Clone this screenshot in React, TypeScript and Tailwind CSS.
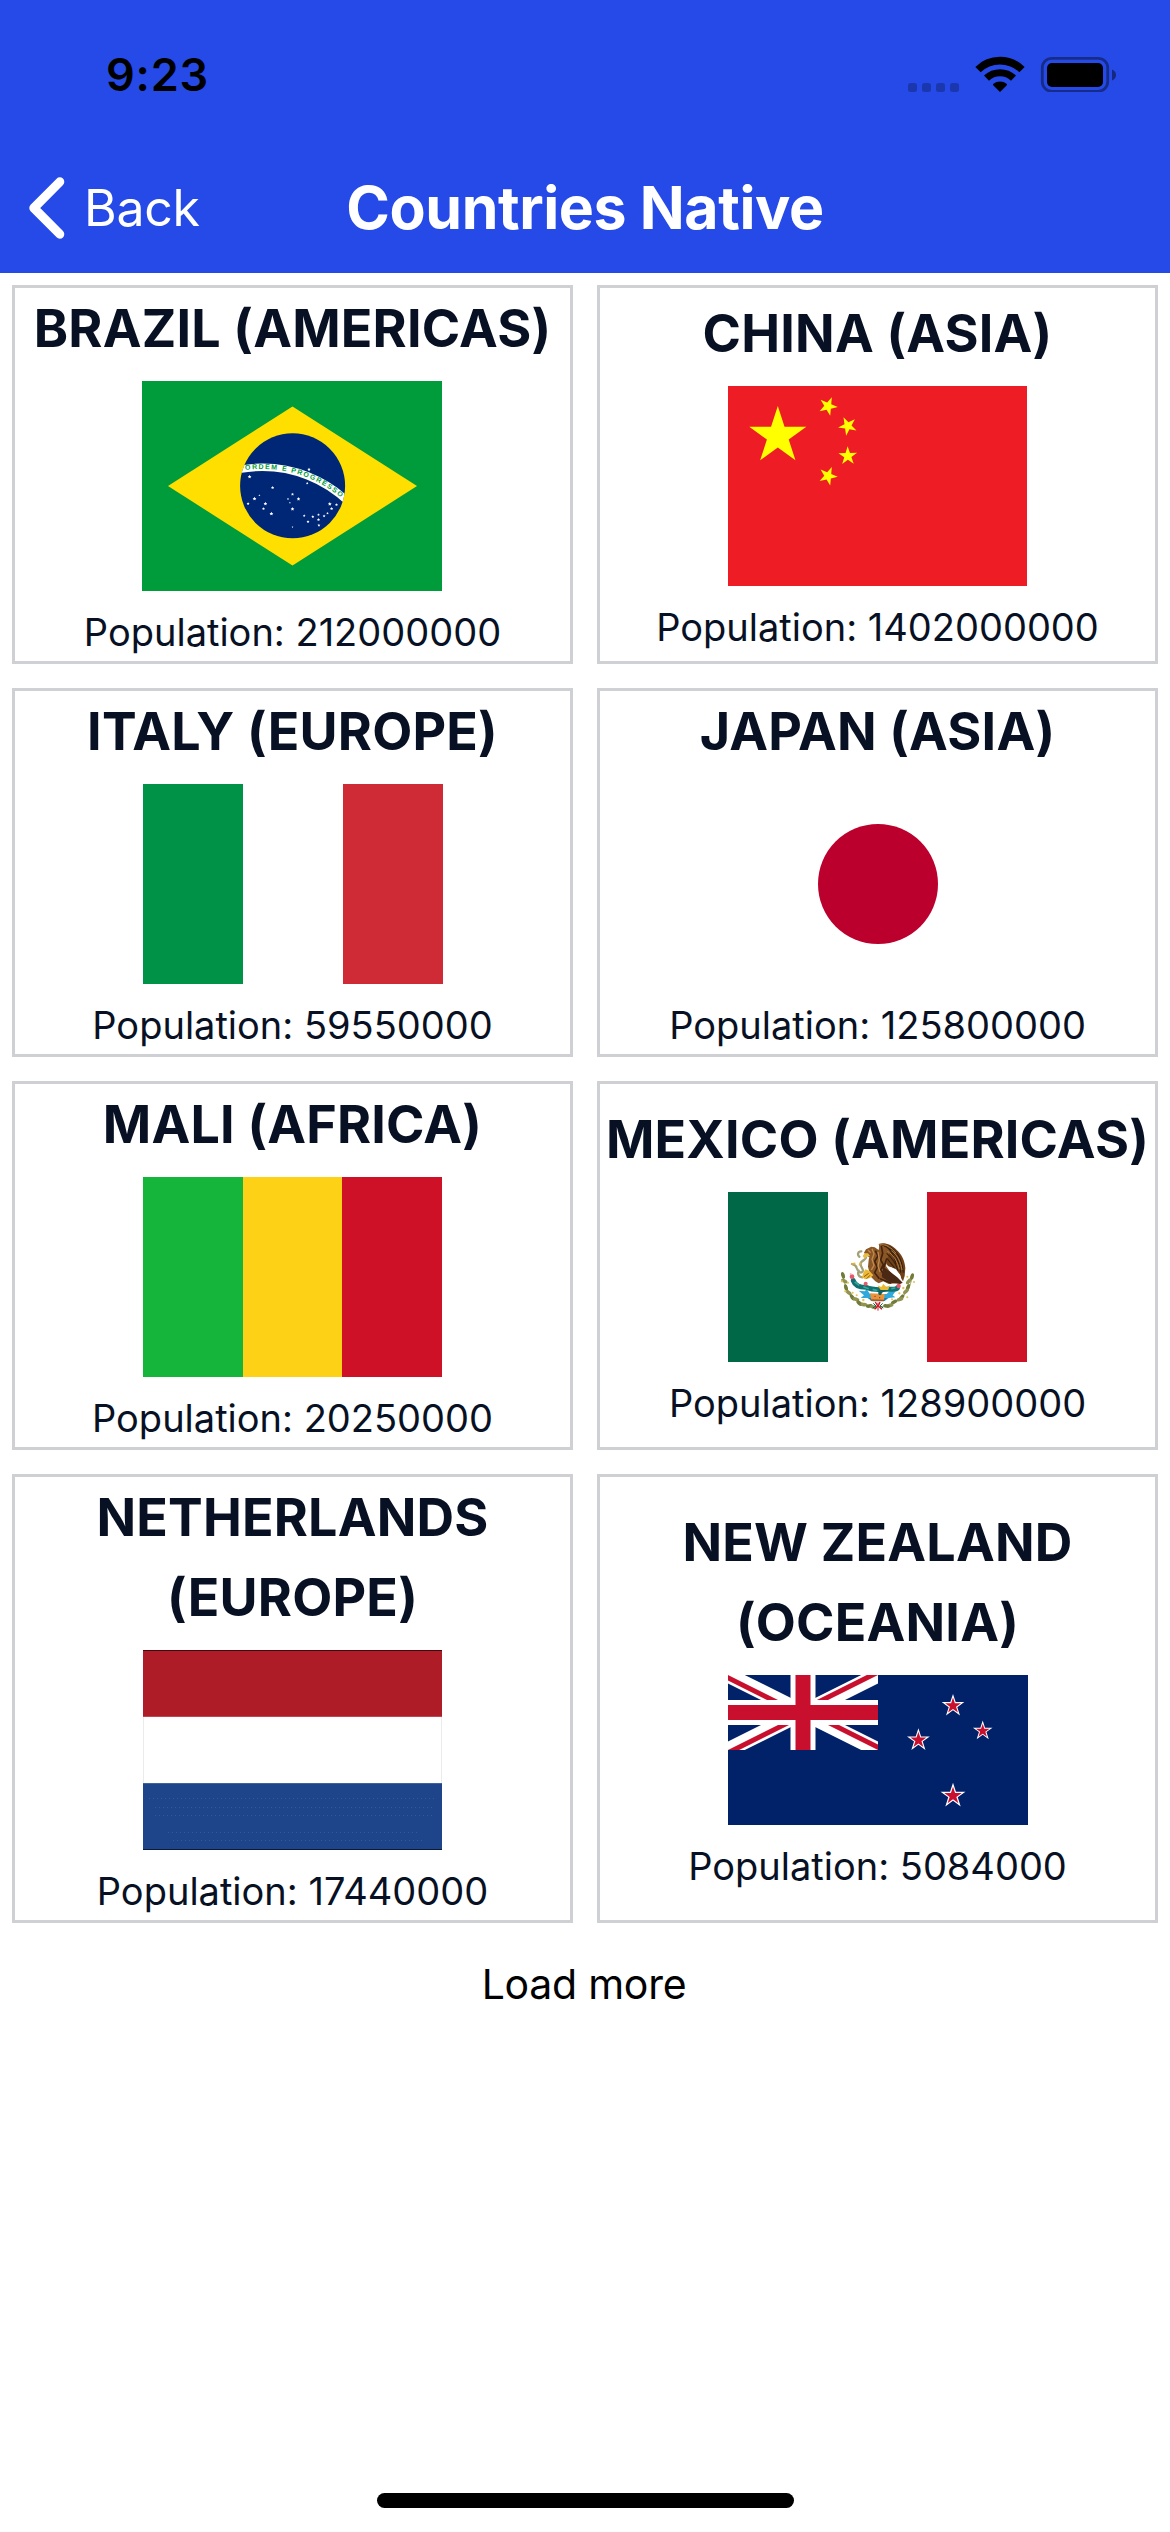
import type { ReactNode } from "react";

function starPoints(cx: number, cy: number, r: number, angle = -90, inner = 0.382) {
  return Array.from({ length: 10 }, (_, i) => {
    const a = ((angle + i * 36) * Math.PI) / 180;
    const rad = i % 2 ? r * inner : r;
    return `${(cx + rad * Math.cos(a)).toFixed(2)},${(cy + rad * Math.sin(a)).toFixed(2)}`;
  }).join(" ");
}

const brazilStars: [number, number, number][] = [
  [167, 88.5, 1.7], [107.6, 95.7, 1.9], [130.6, 106.7, 1.7], [112.5, 117.7, 2], [117.4, 114.3, 1],
  [106.1, 122.7, 1.5], [123.4, 122.7, 1.9], [121.5, 127.7, 1.5], [129.4, 132.7, 2], [150.5, 113.3, 1.6],
  [156.5, 118, 1.9], [146, 118, 1.1], [147.9, 121.7, 0.9], [150.5, 128, 2], [165.2, 102.3, 1.3],
  [187.8, 123, 2], [194.5, 123.7, 1.5], [189.6, 127.7, 1.7], [185.5, 132.3, 1.3], [182.1, 135, 1.5],
  [176.5, 133.7, 1.4], [170.8, 135.7, 1.5], [162.2, 134.7, 1.4], [166, 140.7, 1.5], [176.5, 138.7, 1.6],
  [176.9, 144.3, 1.5], [150.5, 146, 0.9],
];

function Brazil() {
  return (
    <svg className="mr-px h-[210px] w-[300px]" viewBox="0 0 300 210">
      <defs>
        <clipPath id="globe"><circle cx="150.6" cy="104.8" r="52.5" /></clipPath>
        <path id="motto" d="M103.4 89.1 A122 122 0 0 1 201.6 119" />
      </defs>
      <rect width="300" height="210" fill="#009c3b" />
      <path d="M150.5 25.5L275 105L150.5 184.5L26 105Z" fill="#ffdf00" />
      <circle cx="150.6" cy="104.8" r="52.5" fill="#002776" />
      <g clipPath="url(#globe)">
        <circle cx="120.5" cy="210" r="123.75" fill="none" stroke="#fff" strokeWidth="7.5" />
      </g>
      <text fill="#009c3b" fontSize="7" fontWeight="700" fontFamily="Liberation Sans, sans-serif">
        <textPath href="#motto" textLength="102">ORDEM E PROGRESSO</textPath>
      </text>
      {brazilStars.map(([x, y, r], i) => <polygon key={i} points={starPoints(x, y, r, -90, 0.5)} fill="#fff" />)}
    </svg>
  );
}

function China() {
  return (
    <svg className="h-[200px] w-[299px]" viewBox="0 0 299 200">
      <rect width="299" height="200" fill="#ee1c25" />
      <g fill="#ff0">
        <polygon points={starPoints(49.8, 50, 30)} />
        <polygon points={starPoints(100, 20.2, 9.8, 149)} />
        <polygon points={starPoints(119.8, 40, 9.8, 171.9)} />
        <polygon points={starPoints(119.8, 70, 9.8, 197)} />
        <polygon points={starPoints(100, 90, 9.8, 149 + 72)} />
      </g>
    </svg>
  );
}

function Italy() {
  return (
    <div className="ml-px flex h-[200px] w-[300px]">
      <div className="w-[100px] bg-[#009246]" />
      <div className="w-[100px] bg-white" />
      <div className="w-[100px] bg-[#ce2b37]" />
    </div>
  );
}

function Japan() {
  return (
    <div className="ml-px flex h-[200px] w-[300px] items-center justify-center bg-white">
      <div className="size-[120px] rounded-full bg-[#bc002d]" />
    </div>
  );
}

function Mali() {
  return (
    <div className="flex h-[200px] w-[299px]">
      <div className="w-[100px] bg-[#14b53a]" />
      <div className="w-[99px] bg-[#fcd116]" />
      <div className="w-[100px] bg-[#ce1126]" />
    </div>
  );
}

const leaves: [number, number, number][] = [
  [69, 166, 75], [73, 183, 30], [78, 203, 75], [86, 218, 40], [97, 232, 55], [108, 238, 20], [118, 250, 40],
  [132, 254, 5], [148, 258, -10], [160, 261, 15], [276, 170, -75], [266, 184, -50], [264, 202, -70],
  [258, 214, -40], [245, 232, -50], [240, 238, -20], [222, 246, -30], [210, 256, -10], [200, 258, 10],
];

function Mexico() {
  return (
    <svg className="h-[170px] w-[299px]" viewBox="0 0 299 170">
      <rect width="299" height="170" fill="#fff" />
      <rect width="100" height="170" fill="#006847" />
      <rect x="199" width="100" height="170" fill="#ce1126" />
      <g transform="translate(92 28) scale(.33333)">
        <path d="M70 172C76 222 116 256 172 260" fill="none" stroke="#8b8b45" strokeWidth="2.5" />
        <path d="M276 172C268 224 230 256 180 260" fill="none" stroke="#8b8b45" strokeWidth="2.5" />
        {leaves.map(([x, y, a], i) => (
          <ellipse key={i} cx={x} cy={y} rx="10.5" ry="5.5" fill={i % 2 ? "#8f9550" : "#727b39"} transform={`rotate(${a} ${x} ${y})`} />
        ))}
        <g fill="#e6c155">
          <circle cx="66" cy="184" r="3.5" /><circle cx="84" cy="188" r="3" /><circle cx="76" cy="214" r="3.5" />
          <circle cx="98" cy="218" r="3" /><circle cx="110" cy="226" r="3" /><circle cx="130" cy="240" r="3.5" />
          <circle cx="262" cy="170" r="3" /><circle cx="282" cy="186" r="3" /><circle cx="250" cy="204" r="3.5" />
          <circle cx="238" cy="220" r="3.5" /><circle cx="216" cy="238" r="3" /><circle cx="262" cy="232" r="3" />
        </g>
        {/* ribbon */}
        <path d="M166 246L173 258L164 268M180 246L175 258L186 268" fill="none" stroke="#ce1126" strokeWidth="4" />
        <path d="M160 250L168 258L158 264" fill="none" stroke="#006847" strokeWidth="3" />
        <path d="M188 250L180 258L190 264" fill="none" stroke="#006847" strokeWidth="3" />
        <path d="M174 248V272" stroke="#c22" strokeWidth="3" />
        {/* water and stone */}
        <path d="M116 212L134 214L140 208L150 222L200 222L208 214L228 212L218 226L226 232L206 234L194 243H156L142 234L122 234L132 226Z" fill="#2fa9dc" />
        <path d="M146 234H202L192 244H158Z" fill="#1678a8" />
        <path d="M150 220L194 222L192 243L154 242Z" fill="#e8933c" />
        <path d="M152 240L192 241" stroke="#a8521c" strokeWidth="4" />
        <circle cx="165" cy="229" r="2" fill="#8a3f14" /><circle cx="179" cy="233" r="2" fill="#8a3f14" />
        {/* cactus */}
        <path d="M100 182C106 200 122 202 138 202C156 210 176 210 200 208C214 206 228 210 232 204" fill="none" stroke="#12706f" strokeWidth="15" strokeLinecap="round" />
        <path d="M104 186L118 196M130 200L146 206M158 208L172 212M190 206L206 206M214 206L226 204" fill="none" stroke="#35a79c" strokeWidth="5" />
        <path d="M180 220C180 212 190 210 196 208" fill="none" stroke="#0f625f" strokeWidth="11" strokeLinecap="round" />
        <path d="M172 196L184 201L190 192L200 202L210 196L204 210H182Z" fill="#edb92e" />
        <g fill="#e8586c">
          <circle cx="96" cy="170" r="7" /><circle cx="137" cy="191" r="6" /><circle cx="236" cy="198" r="6.5" />
        </g>
        <circle cx="92" cy="162" r="3" fill="#f4b8a8" /><circle cx="240" cy="190" r="3" fill="#f4b8a8" />
        {/* serpent */}
        <path d="M124 94C112 94 112 106 118 110M138 112C138 122 124 120 122 130C120 142 132 146 128 154C122 164 112 150 110 144C108 134 102 134 96 132M116 152C112 162 116 172 128 172" fill="none" stroke="#a3a277" strokeWidth="7" strokeLinecap="round" />
        <path d="M94 132L106 130M122 128L118 136" stroke="#dfb53a" strokeWidth="5" />
        {/* eagle */}
        <path d="M176 72C192 66 216 74 230 90C246 104 254 122 256 144L254 168L249 184L244 176L240 164L234 158L222 146L204 138L190 118Z" fill="#704018" />
        <path d="M138 88L146 84L154 80L164 82L176 90L178 78C188 68 206 76 212 84L204 112L198 138L208 152L238 186L226 190L206 192L190 184L176 190L166 184L154 172L148 156L144 140L146 120L148 112L138 106L132 98Z" fill="#8a5626" />
        <path d="M184 74C204 78 222 98 228 134M192 78C216 86 236 112 242 158M200 100C214 112 228 130 234 152M206 78C228 90 246 116 250 158M200 114L224 144" fill="none" stroke="#34200f" strokeWidth="3.5" />
        <path d="M178 74C196 72 216 82 228 100M202 94C218 102 232 122 238 148M214 92C230 104 242 122 246 150" fill="none" stroke="#b27a3e" strokeWidth="3" />
        <path d="M184 78L188 100L182 120L190 134L182 150L194 166M166 92L174 108L164 124L172 142L164 158L178 176M200 116L190 146L206 170M186 164L232 186M180 176L214 190" fill="none" stroke="#432310" strokeWidth="5" />
        <path d="M156 86L162 102L156 118L162 136L154 150M174 96L178 120L174 138L180 156M144 90L152 98" fill="none" stroke="#c28b4c" strokeWidth="4" />
        <path d="M190 140L198 146L232 172L248 188L240 192L212 188L186 172Z" fill="#4a2814" />
        <path d="M210 140L228 148L240 164L244 178L236 174L218 158Z" fill="#fff" />
        <path d="M134 100L128 108L134 116L140 110L150 108L144 100Z" fill="#e8bd45" />
        <path d="M136 148L130 158L126 172L136 178L150 174L160 166L148 152Z" fill="#edb935" />
        <path d="M132 170L146 160M140 176L150 166" stroke="#8a5a14" strokeWidth="3" />
      </g>
    </svg>
  );
}

function Netherlands() {
  return (
    <svg className="h-[200px] w-[299px]" viewBox="0 0 299 200">
      <rect width="299" height="67" fill="#ae1c28" />
      <rect width="299" height="1" fill="#3f0a10" />
      <rect y="66" width="299" height="1" fill="#bd4851" />
      <rect y="67" width="299" height="66" fill="#ebebeb" />
      <rect x="1" y="67" width="297" height="66" fill="#fff" />
      <rect y="133" width="299" height="67" fill="#1e458a" />
      <rect y="133" width="299" height="1" fill="#3f62a0" />
      <path d="M6 148.5H291M12 157.5H292M12 165.5H292M25 182.5H275M30 190.5H280" stroke="#34589a" strokeWidth="1" strokeDasharray="1 3" />
      <rect y="199" width="299" height="1" fill="#0b1a38" />
    </svg>
  );
}

const nzStars: [number, number, number][] = [[225, 30.8, 11.9], [254.7, 55.9, 10.3], [190.4, 65.2, 12], [225, 120.8, 13.1]];

function NewZealand() {
  return (
    <svg className="ml-px h-[150px] w-[300px]" viewBox="0 0 300 150">
      <defs>
        <clipPath id="canton"><path d="M0 0H150V75H0Z" /></clipPath>
        <clipPath id="saltire"><path d="M75 37.5H150V75ZM75 37.5V75H0ZM75 37.5H0V0ZM75 37.5V0H150Z" /></clipPath>
      </defs>
      <rect width="300" height="150" fill="#012169" />
      <g clipPath="url(#canton)">
        <path d="M0 0L150 75M150 0L0 75" stroke="#fff" strokeWidth="15" />
        <g clipPath="url(#saltire)">
          <path d="M0 0L150 75M150 0L0 75" stroke="#c8102e" strokeWidth="10" />
        </g>
        <path d="M75 0V75M0 37.5H150" stroke="#fff" strokeWidth="25" />
        <path d="M75 0V75M0 37.5H150" stroke="#c8102e" strokeWidth="15" />
      </g>
      {nzStars.map(([x, y, r], i) => (
        <g key={i}>
          <polygon points={starPoints(x, y, r)} fill="#fff" />
          <polygon points={starPoints(x, y, r * 0.7)} fill="#c8102e" />
        </g>
      ))}
    </svg>
  );
}

type Country = { name: string; region: string; population: number; flag: ReactNode };

const countries: Country[] = [
  { name: "BRAZIL", region: "AMERICAS", population: 212000000, flag: <Brazil /> },
  { name: "CHINA", region: "ASIA", population: 1402000000, flag: <China /> },
  { name: "ITALY", region: "EUROPE", population: 59550000, flag: <Italy /> },
  { name: "JAPAN", region: "ASIA", population: 125800000, flag: <Japan /> },
  { name: "MALI", region: "AFRICA", population: 20250000, flag: <Mali /> },
  { name: "MEXICO", region: "AMERICAS", population: 128900000, flag: <Mexico /> },
  { name: "NETHERLANDS", region: "EUROPE", population: 17440000, flag: <Netherlands /> },
  { name: "NEW ZEALAND", region: "OCEANIA", population: 5084000, flag: <NewZealand /> },
];

function CountryCard({ name, region, population, flag }: Country) {
  return (
    <article className="flex flex-col items-center justify-center border-[3px] border-[#cfd0d4] text-[#081124]">
      <h2 className="pt-px text-center text-[52px] leading-[80px] font-bold tracking-[0.2px]">{`${name} (${region})`}</h2>
      <div className="my-3">{flag}</div>
      <p className="text-[38px] leading-[58px]">Population: {population}</p>
    </article>
  );
}

function StatusIcons() {
  return (
    <svg className="h-[36px] w-[208px]" viewBox="0 0 208 36">
      <g fillOpacity="0.25">
        <rect x="0" y="27" width="9" height="9" rx="2.5" />
        <rect x="14" y="27" width="9" height="9" rx="2.5" />
        <rect x="28" y="27" width="9" height="9" rx="2.5" />
        <rect x="42" y="27" width="9" height="9" rx="2.5" />
      </g>
      <g fill="none" stroke="#000">
        <path d="M70 13.6A31.5 31.5 0 0 1 114 13.6" strokeWidth="7.6" />
        <path d="M78.5 22.2A19.4 19.4 0 0 1 105.5 22.2" strokeWidth="7.2" />
      </g>
      <path d="M92 36L85.2 29.2Q84.6 28.4 85.4 27.8A10.5 10.5 0 0 1 98.6 27.8Q99.4 28.4 98.8 29.2Z" />
      <rect x="134.3" y="2.3" width="65.4" height="33" rx="9.5" fill="none" stroke="#000" strokeOpacity="0.4" strokeWidth="2.8" />
      <rect x="139" y="7" width="56" height="24" rx="5" />
      <path d="M204 13.5Q208 15.2 208 19T204 24.5Z" fillOpacity="0.45" />
    </svg>
  );
}

export default function App() {
  return (
    <div className="flex h-[2532px] w-[1170px] flex-col bg-white font-['Inter',sans-serif]">
      <header className="h-[273px] bg-[#254ae7]">
        <div className="flex h-[144px] items-center justify-between pt-1 pr-[54px] pl-[106px] text-black">
          <span className="text-[45px] leading-none font-semibold tracking-[0.8px]">9:23</span>
          <StatusIcons />
        </div>
        <div className="grid h-[129px] grid-cols-[1fr_auto_1fr] items-center pb-0.5 text-white">
          <div className="flex items-center pl-[28px]">
            <svg className="h-[62px] w-[38px]" viewBox="0 0 38 62" fill="none" stroke="#fff" strokeWidth="9" strokeLinecap="round" strokeLinejoin="round">
              <path d="M31.8 4.8L5.8 31L31.8 57.2" />
            </svg>
            <span className="ml-[18px] text-[50px] leading-none tracking-[-0.3px]">Back</span>
          </div>
          <h1 className="text-[59px] leading-none font-bold tracking-[-0.4px]">Countries Native</h1>
        </div>
      </header>
      <main className="flex flex-1 flex-col items-center">
        <section className="grid w-full grid-cols-2 grid-rows-[379px_369px_369px_449px] gap-6 p-3">
          {countries.map((c) => <CountryCard key={c.name} {...c} />)}
        </section>
        <button className="mt-[19px] pr-0.5 text-[41px] leading-[60px] tracking-[-0.25px] text-black">Load more</button>
      </main>
      <div className="mx-auto mb-[24px] h-[15px] w-[417px] rounded-full bg-black" />
    </div>
  );
}
